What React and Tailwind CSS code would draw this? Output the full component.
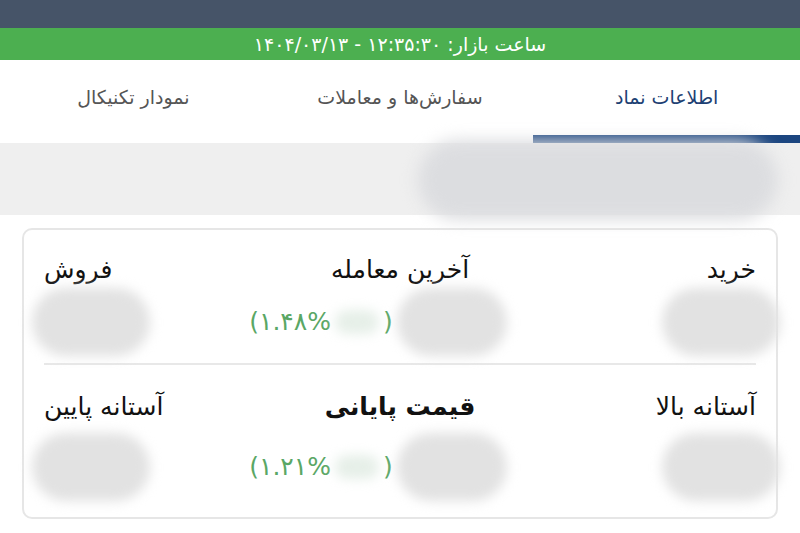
import React from 'react';

const Blob = ({ className }) => (
  <div className={`rounded-full bg-[#e2e2e2] blur-[6px] ${className}`} />
);

const Cell = ({ label, bold, align, change, gap }) => {
  const alignCls =
    align === 'start' ? 'items-start' : align === 'end' ? 'items-end' : 'items-center';
  return (
    <div className={`flex flex-col ${alignCls}`}>
      <div className={`text-[25px] leading-[36px] text-[#111] whitespace-nowrap ${bold ? 'font-bold' : ''}`}>{label}</div>
      {change ? (
        <div dir="ltr" className={`flex items-center mr-[44px] ${gap}`}>
          <span className="text-[25px] text-[#5aa765] whitespace-nowrap">({change}</span>
          <Blob className="w-[44px] h-[24px] bg-[#e6efe8] mx-1" />
          <span className="text-[25px] text-[#5aa765]">)</span>
          <Blob className="w-[110px] h-[68px] ml-1" />
        </div>
      ) : (
        <Blob className={`w-[118px] h-[68px] ${gap} ${align === 'start' ? '-mr-[24px]' : '-ml-[12px]'}`} />
      )}
    </div>
  );
};

export default function App() {
  return (
    <div dir="rtl" className="w-[800px] h-[533px] bg-white overflow-hidden font-['DejaVu_Sans',sans-serif]">
      <div className="h-[28px] bg-[#465468]" />
      <div className="h-[32px] bg-[#4caf50] flex items-center justify-center text-white text-[19px]">
        ساعت بازار: ۱۲:۳۵:۳۰ - ۱۴۰۴/۰۳/۱۳
      </div>

      <div className="relative">
        <div className="grid grid-cols-3 h-[83px] bg-white">
          <div className="flex flex-col">
            <div className="flex-1 flex items-center justify-center text-[19px] text-[#1d3f73]">اطلاعات نماد</div>
            <div className="h-[8px] bg-[#1c4680]" />
          </div>
          <div className="flex items-center justify-center pb-[8px] text-[19px] text-[#555]">سفارش‌ها و معاملات</div>
          <div className="flex items-center justify-center pb-[8px] text-[19px] text-[#555]">نمودار تکنیکال</div>
        </div>
        <div className="h-[72px] bg-[#efefef]" />
        <div className="absolute right-[22px] top-[80px] w-[360px] h-[80px] rounded-[40px] bg-[#dcdde0] blur-[8px]" />
      </div>

      <div className="mx-[22px] mt-[13px] h-[291px] rounded-[10px] border-2 border-[#e6e6e6] px-[20px]">
        <div className="grid grid-cols-3 pt-[22px] h-[135px] border-b-2 border-[#e8e8e8]">
          <Cell label="خرید" align="start" gap="mt-0" />
          <Cell label="آخرین معامله" align="center" change="۱.۴۸%" gap="mt-0" />
          <Cell label="فروش" align="end" gap="mt-0" />
        </div>
        <div className="grid grid-cols-3 pt-[24px]">
          <Cell label="آستانه بالا" align="start" gap="mt-[8px]" />
          <Cell label="قیمت پایانی" bold align="center" change="۱.۲۱%" gap="mt-[8px]" />
          <Cell label="آستانه پایین" align="end" gap="mt-[8px]" />
        </div>
      </div>
    </div>
  );
}
